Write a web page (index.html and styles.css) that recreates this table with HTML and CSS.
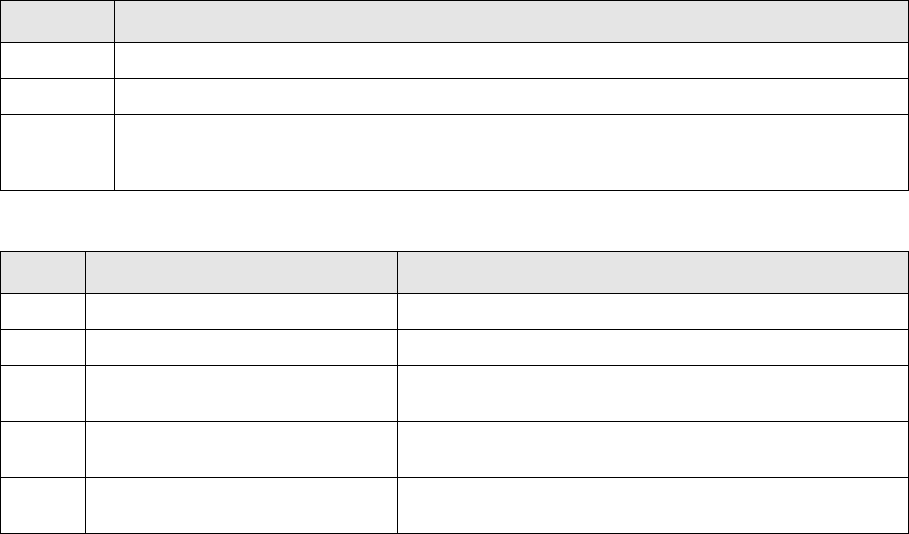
FILE: index.html
```html
<!DOCTYPE html>
<html>
<head>
<meta charset="utf-8">
<link rel="stylesheet" href="styles.css">
</head>
<body>
<div class="grid grid-a" role="table">
  <div class="cell head"></div><div class="cell head"></div>
  <div class="cell r36"></div><div class="cell r36"></div>
  <div class="cell r36"></div><div class="cell r36"></div>
  <div class="cell r76"></div><div class="cell r76"></div>
</div>
<div class="grid grid-b" role="table">
  <div class="cell head"></div><div class="cell head"></div><div class="cell head"></div>
  <div class="cell r36"></div><div class="cell r36"></div><div class="cell r36"></div>
  <div class="cell r36"></div><div class="cell r36"></div><div class="cell r36"></div>
  <div class="cell r56"></div><div class="cell r56"></div><div class="cell r56"></div>
  <div class="cell r56"></div><div class="cell r56"></div><div class="cell r56"></div>
  <div class="cell r56"></div><div class="cell r56"></div><div class="cell r56"></div>
</div>
</body>
</html>
```
FILE: styles.css
```css
html, body {
  margin: 0;
  padding: 0;
  background: #ffffff;
  font-family: "Liberation Sans", Arial, sans-serif;
}
.grid {
  display: grid;
  width: 909px;
  box-sizing: border-box;
  border-left: 1px solid #000;
  border-top: 1px solid #000;
}
.grid-a {
  grid-template-columns: 114px 794px;
}
.grid-b {
  margin-top: 60px;
  grid-template-columns: 85px 312px 511px;
}
.cell {
  box-sizing: border-box;
  border-right: 1px solid #000;
  border-bottom: 1px solid #000;
}
.head {
  height: 42px;
  background: #e5e5e5;
}
.r36 { height: 36px; }
.r56 { height: 56px; }
.r76 { height: 76px; }
```
